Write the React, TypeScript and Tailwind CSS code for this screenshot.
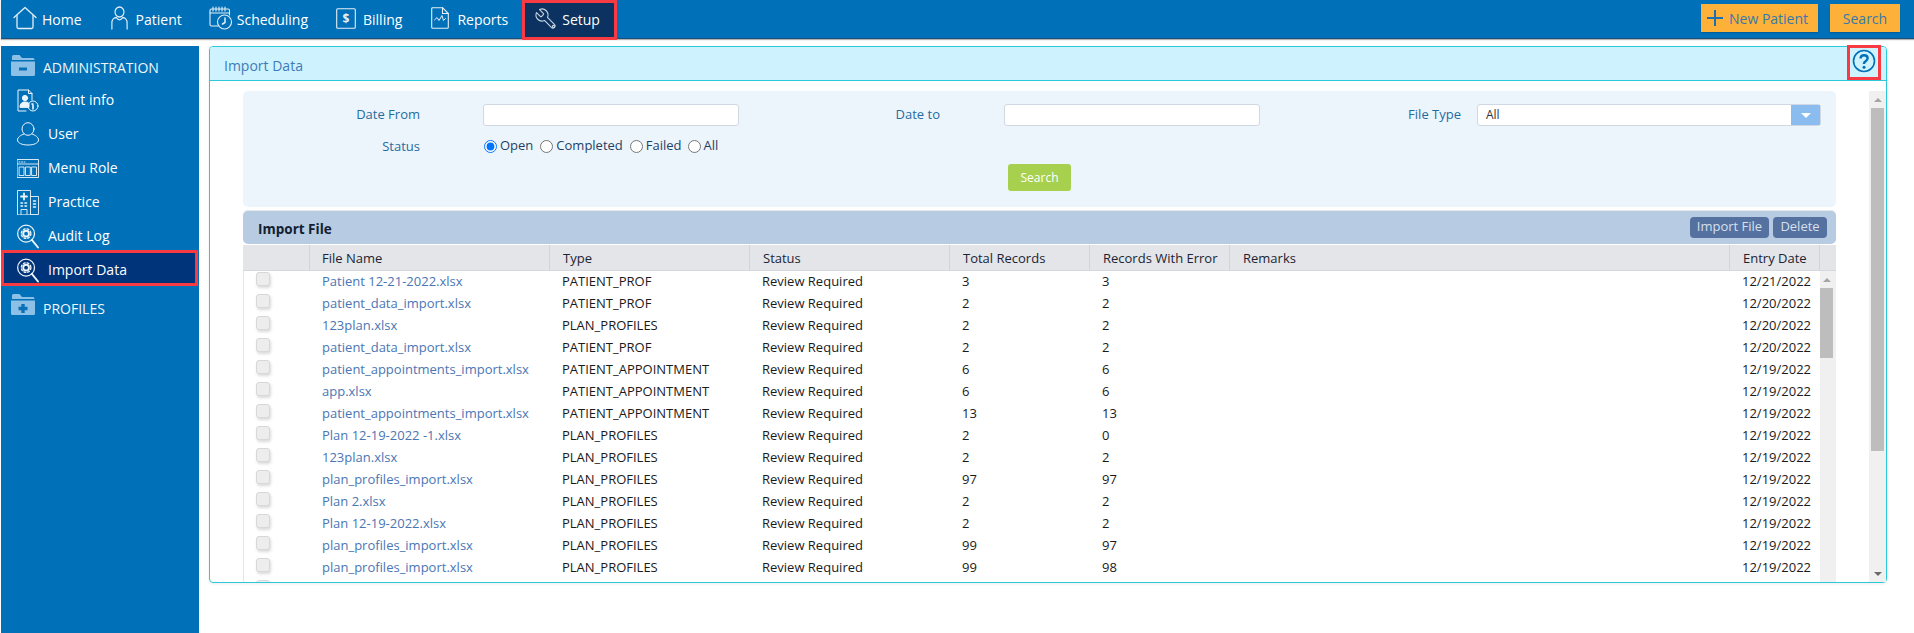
import React from "react";

const S = { fill: "none", stroke: "currentColor", strokeWidth: 1.3, strokeLinecap: "round" as const, strokeLinejoin: "round" as const };

const HomeIcon = () => (
  <svg width="24" height="24" viewBox="0 0 24 24" {...S}>
    <path d="M1 11.5 12 1.5l11 10" />
    <path d="M4 9.5V21a1.5 1.5 0 0 0 1.5 1.5h13A1.5 1.5 0 0 0 20 21V9.5" />
  </svg>
);
const PatientIcon = () => (
  <svg width="17" height="24" viewBox="0 0 19 24" preserveAspectRatio="none" {...S}>
    <circle cx="9.5" cy="6" r="5" />
    <path d="M1 23v-6c0-3.5 2.5-5.5 5-5.5 1 1.5 2.2 2.3 3.5 2.3S12 13 13 11.500c2.500 0 5 2 5 5.500v6" />
  </svg>
);
const ScheduleIcon = () => (
  <svg width="24" height="24" viewBox="0 0 24 24" {...S} strokeWidth={1.1}>
    <path d="M9 20H2.500A1.500 1.500 0 0 1 1 18.500V4.500A1.500 1.500 0 0 1 2.500 3H19a1.500 1.500 0 0 1 1.500 1.500V9" />
    <path d="M4 1v4M7 1v4M10 1v4M13 1v4M16 1v4" />
    <path d="M1 7h19.500" />
    <circle cx="15.500" cy="16" r="7" />
    <path d="M16 12v4.500l-2.500 1.500" strokeWidth={1.5} />
  </svg>
);
const BillIcon = () => (
  <svg width="20" height="21" viewBox="0 0 20 21" {...S} strokeWidth={1.1}>
    <rect x="0.700" y="0.700" width="18.600" height="19.600" rx="1" />
    <text x="10" y="15" textAnchor="middle" fontSize="12" fontWeight="700" fill="currentColor" stroke="none" fontFamily="'Open Sans',sans-serif">$</text>
  </svg>
);
const ReportIcon = () => (
  <svg width="18" height="22" viewBox="0 0 18 22" {...S} strokeWidth={1.1}>
    <path d="M11.500 0.700H1.700a1 1 0 0 0-1 1v18.600a1 1 0 0 0 1 1h14.600a1 1 0 0 0 1-1V6.500z" />
    <path d="M11.500 0.700V6.500h5.800" />
    <path d="M3.500 13l2.500-2.500 2 3 3-5 1.500 5 2-2" strokeWidth={1} />
  </svg>
);
const WrenchIcon = () => (
  <svg width="24" height="24" viewBox="0 0 24 24" {...S} strokeWidth={1.1} className="text-[#c8d4e2] -mt-[2px]">
    <g transform="translate(24 0) scale(-1 1)">
      <path d="M14.700 6.300a1 1 0 0 0 0 1.400l1.600 1.600a1 1 0 0 0 1.400 0l3.770-3.770a6 6 0 0 1-7.940 7.940l-6.910 6.910a2.120 2.120 0 0 1-3-3l6.910-6.910a6 6 0 0 1 7.940-7.940l-3.760 3.760z" />
      <circle cx="4.500" cy="19.500" r="1.100" />
    </g>
  </svg>
);
const FolderIcon = ({ plus }: { plus?: boolean }) => (
  <svg width="24" height="21" viewBox="0 0 24 21">
    <path d="M1 5V1.500A1.500 1.500 0 0 1 2.500 0h6L11 3h11a1.500 1.500 0 0 1 1.500 1.500V5z" fill="#8cc0e6" />
    <path d="M0 6.500h24v13a1.500 1.500 0 0 1-1.500 1.500h-21A1.500 1.500 0 0 1 0 19.500z" fill="#8cc0e6" />
    {plus ? <path d="M10.300 10h3.400v2.800h2.800v3.400h-2.800V19h-3.400v-2.800H7.500v-3.400h2.800z" fill="#0b70b6" /> : <rect x="8" y="12.500" width="8" height="3" fill="#0b70b6" />}
  </svg>
);
const ClientIcon = () => (
  <svg width="22" height="23" viewBox="0 0 22 23" {...S} strokeWidth={1}>
    <path d="M9 22H1V1h10.500L15 4.500V11" />
    <path d="M11.500 1v3.500H15" />
    <circle cx="8" cy="9" r="2.600" fill="currentColor" />
    <path d="M3 18c0-3.500 2-5 5-5s3.500.8 4 1.500V18z" fill="currentColor" />
    <circle cx="16" cy="17" r="5" />
    <path d="M16 16v4M15 15h1" strokeWidth={1.6} />
  </svg>
);
const UserIcon = () => (
  <svg width="22" height="24" viewBox="0 0 22 24" {...S} strokeWidth={1}>
    <ellipse cx="11" cy="7" rx="6" ry="6.300" />
    <path d="M7 12c-3.500 1.200-6.500 3.300-6.500 6 0 3 4.500 5 10.500 5s10.500-2 10.500-5c0-2.700-3-4.800-6.500-6" />
  </svg>
);
const MenuIcon = () => (
  <svg width="22" height="19" viewBox="0 0 22 19" {...S} strokeWidth={0.9}>
    <rect x="0.500" y="0.500" width="21" height="18" />
    <path d="M0.500 5h21" />
    <path d="M2 3h1M4.500 3h1M7 3h1" />
    <rect x="2.500" y="8" width="4.500" height="8.500" />
    <rect x="8.800" y="8" width="4.500" height="8.500" />
    <rect x="15" y="8" width="4.500" height="8.500" />
  </svg>
);
const PracticeIcon = () => (
  <svg width="22" height="25" viewBox="0 0 22 25" {...S} strokeWidth={0.9}>
    <path d="M0.500 24.500V0.500h13v24z" />
    <path d="M13.500 6.500h8v18h-8" />
    <path d="M7 3.500v6M4 6.500h6" strokeWidth={1.800} />
    <path d="M4 13h1.500M8 13h1.500M4 16h1.500M8 16h1.500M16.500 11h2M16.500 14h2M16.500 17h2" strokeWidth={1.500} />
    <path d="M4 24.500V19.500h6v5" />
  </svg>
);
const AuditIcon = () => (
  <svg width="23" height="25" viewBox="0 0 23 25" {...S}>
    <circle cx="9.500" cy="9.500" r="8.800" />
    <circle cx="9.500" cy="9.500" r="3" strokeWidth={2} />
    <circle cx="9.500" cy="9.500" r="5" strokeWidth={1.400} strokeDasharray="2 2" />
    <path d="M15.500 16 22 24" strokeWidth={2} />
  </svg>
);
const HelpIcon = () => (
  <svg width="24" height="24" viewBox="0 0 24 24" fill="none" stroke="#0070b8" className="-mt-[3px]">
    <circle cx="12" cy="12" r="10.500" strokeWidth="1.600" />
    <path d="M8.500 9.500C8.700 7.300 10 6.300 12 6.300c2.200 0 3.600 1.200 3.600 3 0 1.500-1 2.300-2 3-.9.600-1.600 1.200-1.600 2.300v.5" strokeWidth="2.400" />
    <circle cx="12" cy="18.300" r="1.500" fill="#0070b8" stroke="none" />
  </svg>
);

const nav: { label: string; icon: React.ReactNode; w: string; gap: string; ml: string }[] = [
  { label: "Home", icon: <HomeIcon />, w: "w-[24px]", gap: "ml-[5px]", ml: "ml-[12px]" },
  { label: "Patient", icon: <PatientIcon />, w: "w-[17px]", gap: "ml-[8px]", ml: "ml-[29px]" },
  { label: "Scheduling", icon: <ScheduleIcon />, w: "w-[24px]", gap: "ml-[4px]", ml: "ml-[27px]" },
  { label: "Billing", icon: <BillIcon />, w: "w-[20px]", gap: "ml-[7px]", ml: "ml-[28px]" },
  { label: "Reports", icon: <ReportIcon />, w: "w-[18px]", gap: "ml-[8px]", ml: "ml-[29px]" },
];

const side: { label: string; icon: React.ReactNode }[] = [
  { label: "Client info", icon: <ClientIcon /> },
  { label: "User", icon: <UserIcon /> },
  { label: "Menu Role", icon: <MenuIcon /> },
  { label: "Practice", icon: <PracticeIcon /> },
  { label: "Audit Log", icon: <AuditIcon /> },
];

const rows: [string, string, string, string, string][] = [
  ["Patient 12-21-2022.xlsx", "PATIENT_PROF", "3", "3", "12/21/2022"],
  ["patient_data_import.xlsx", "PATIENT_PROF", "2", "2", "12/20/2022"],
  ["123plan.xlsx", "PLAN_PROFILES", "2", "2", "12/20/2022"],
  ["patient_data_import.xlsx", "PATIENT_PROF", "2", "2", "12/20/2022"],
  ["patient_appointments_import.xlsx", "PATIENT_APPOINTMENT", "6", "6", "12/19/2022"],
  ["app.xlsx", "PATIENT_APPOINTMENT", "6", "6", "12/19/2022"],
  ["patient_appointments_import.xlsx", "PATIENT_APPOINTMENT", "13", "13", "12/19/2022"],
  ["Plan 12-19-2022 -1.xlsx", "PLAN_PROFILES", "2", "0", "12/19/2022"],
  ["123plan.xlsx", "PLAN_PROFILES", "2", "2", "12/19/2022"],
  ["plan_profiles_import.xlsx", "PLAN_PROFILES", "97", "97", "12/19/2022"],
  ["Plan 2.xlsx", "PLAN_PROFILES", "2", "2", "12/19/2022"],
  ["Plan 12-19-2022.xlsx", "PLAN_PROFILES", "2", "2", "12/19/2022"],
  ["plan_profiles_import.xlsx", "PLAN_PROFILES", "99", "97", "12/19/2022"],
  ["plan_profiles_import.xlsx", "PLAN_PROFILES", "99", "98", "12/19/2022"],
];

const Check = () => (
  <span className="block w-[14px] h-[14px] mt-px ml-[12px] rounded-[3px] bg-[#ededed] border border-[#d8d8d8] shadow-[1px_2px_3px_rgba(0,0,0,0.15)]" />
);

const Radio = ({ label, checked, cls }: { label: string; checked?: boolean; cls: string }) => (
  <label className={`flex items-center ${cls}`}>
    <input type="radio" name="status" defaultChecked={checked} className="m-0 w-[13px] h-[13px]" />
    <span className="ml-[3px] text-[13px] text-[#1f3f66]">{label}</span>
  </label>
);

const Bar = ({ cls, thumbH, downArrow }: { cls: string; thumbH: string; downArrow?: boolean }) => (
  <div className={`${cls} h-full bg-[#f0f0f0] flex flex-col items-center shrink-0`}>
    <div className="h-[17px] flex items-center justify-center shrink-0">
      <span className="w-0 h-0 border-x-[4px] border-x-transparent border-b-[4px] border-b-[#a5a5a5]" />
    </div>
    <div className={`${thumbH} bg-[#bdbdbd] shrink-0 w-[13px]`} />
    <div className="flex-1 flex items-end justify-center pb-[6px]">
      {downArrow ? <span className="w-0 h-0 border-x-[4px] border-x-transparent border-t-[4px] border-t-[#6a6a6a]" /> : null}
    </div>
  </div>
);

export default function App() {
  return (
    <div className="w-[1914px] h-[633px] overflow-hidden bg-white font-['Open_Sans',sans-serif]">
      <header className="ml-px h-[39px] bg-[#0070b8] border-b border-[#1d4e7c] shadow-[0_1px_1px_rgba(0,0,0,0.3)] flex items-start">
        {nav.map((n) => (
          <div key={n.label} className={`${n.ml} h-[37px] flex items-center text-white text-[14px]`}>
            <span className={`${n.w} flex justify-center text-[#e4eff7] -mt-[1px]`}>{n.icon}</span>
            <span className={`${n.gap} mt-[2px]`}>{n.label}</span>
          </div>
        ))}
        <div className="ml-[14px] w-[95px] h-[40px] shrink-0 bg-[#0b3260] border-[3px] border-[#f83a42] flex items-center pl-[9px] text-white text-[14px] relative z-10">
          <WrenchIcon />
          <span className="ml-[4px] -mt-[1px]">Setup</span>
        </div>
        <div className="ml-auto mr-[14px] mt-[4px] flex gap-[12px]">
          <div className="w-[117px] h-[28px] bg-[#fdb138] flex items-center pl-[6px] text-[14px] text-[#3878ad] shadow-[0_1px_1px_rgba(0,0,0,0.15)]">
            <svg width="16" height="16" viewBox="0 0 16 16" stroke="#1c6fb0" strokeWidth="2"><path d="M8 0v16M0 8h16" /></svg>
            <span className="ml-[6px]">New Patient</span>
          </div>
          <div className="w-[70px] h-[28px] bg-[#fdb138] flex items-center justify-center text-[14px] text-[#3878ad] shadow-[0_1px_1px_rgba(0,0,0,0.15)]">Search</div>
        </div>
      </header>

      <div className="flex mt-[7px] ml-px">
        <aside className="w-[198px] h-[590px] bg-[#0070b8] shrink-0 text-white text-[14px]">
          <div className="h-[37px] flex items-start pl-[10px] pt-[9px]">
            <FolderIcon />
            <span className="ml-[8px] mt-[3px] leading-[20px] text-[#f0f6fb]">ADMINISTRATION</span>
          </div>
          {side.map((s) => (
            <div key={s.label} className="h-[34px] flex items-center pl-[16px]">
              <span className="w-[22px] flex justify-center text-[#eef5fa]">{s.icon}</span>
              <span className="ml-[9px] -mt-[1px]">{s.label}</span>
            </div>
          ))}
          <div className="h-[36px] -mt-[3px] mr-px pt-[4px] flex items-center pl-[13px] bg-[#00347a] border-[3px] border-[#f83a42] relative">
            <span className="w-[22px] flex justify-center text-[#eef5fa]"><AuditIcon /></span>
            <span className="ml-[9px] -mt-[1px]">Import Data</span>
          </div>
          <div className="mt-[8px] flex items-start pl-[10px]">
            <FolderIcon plus />
            <span className="ml-[8px] mt-[5px] leading-[20px] text-[#f0f6fb]">PROFILES</span>
          </div>
        </aside>

        <main className="ml-[10px] w-[1678px] h-[537px] shrink-0 border border-[#2cc9d9] rounded-[4px] shadow-[0_1px_3px_rgba(0,0,0,0.08)] flex flex-col">
          <div className="h-[34px] shrink-0 bg-[#cff2ff] border-b border-[#2cc9d9] rounded-t-[3px] flex items-center pl-[14px] pt-[3px] text-[14px] text-[#3d7cb8] relative">
            <span>Import Data</span>
            <div className="absolute right-[5px] -top-[2px] w-[34px] h-[35px] border-[3px] border-[#f83a42] flex items-center justify-center">
              <HelpIcon />
            </div>
          </div>

          <div className="flex flex-1 min-h-0 pt-[10px] pl-[33px]">
            <div className="w-[1593px] shrink-0 flex flex-col min-h-0">
              <section className="h-[116px] shrink-0 bg-[#edf5fc] rounded-[5px] pt-[13px]">
                <div className="flex items-center h-[22px] text-[13px] text-[#1f6c9f]">
                  <span className="w-[177px] text-right">Date From</span>
                  <span className="ml-[63px] w-[256px] h-[22px] bg-white border border-[#cfd8e3] rounded-[3px]" />
                  <span className="w-[201px] text-right">Date to</span>
                  <span className="ml-[64px] w-[256px] h-[22px] bg-white border border-[#cfd8e3] rounded-[3px]" />
                  <span className="w-[201px] text-right">File Type</span>
                  <span className="ml-[16px] w-[344px] h-[22px] bg-white border border-[#cfd8e3] rounded-[3px] flex items-center justify-between text-[12px] text-[#333]">
                    <span className="pl-[8px]">All</span>
                    <span className="w-[29px] h-full bg-[#8bbcf0] flex items-center justify-center">
                      <span className="w-0 h-0 border-x-[5px] border-x-transparent border-t-[5px] border-t-white" />
                    </span>
                  </span>
                </div>
                <div className="flex items-center h-[22px] mt-[9px] text-[13px]">
                  <span className="w-[177px] mt-[2px] text-right text-[#1f6c9f]">Status</span>
                  <Radio label="Open" checked cls="ml-[64px]" />
                  <Radio label="Completed" cls="ml-[7px]" />
                  <Radio label="Failed" cls="ml-[7px]" />
                  <Radio label="All" cls="ml-[6px]" />
                </div>
                <div className="flex mt-[7px] pl-[765px]">
                  <button className="w-[63px] h-[27px] rounded-[3px] bg-[#a6d04e] text-white text-[12px]">Search</button>
                </div>
              </section>

              <div className="h-[33px] mt-[4px] shrink-0 bg-[#b7cbe3] rounded-[5px] flex items-center pl-[15px] pr-[9px] shadow-[0_-1px_1px_rgba(0,0,0,0.1)]">
                <span className="mt-[3px] text-[13.500px] font-bold text-[#13202f]">Import File</span>
                <button className="ml-auto mb-px w-[79px] h-[21px] rounded-[4px] bg-[#54719f] text-[#d6e0ee] text-[13px]">Import File</button>
                <button className="ml-[4px] mb-px w-[54px] h-[21px] rounded-[4px] bg-[#54719f] text-[#d6e0ee] text-[13px]">Delete</button>
              </div>

              <div className="mt-px h-[26px] shrink-0 bg-[#e3e5e9] border-b border-[#d6d8dc] grid grid-cols-[67px_240px_200px_200px_140px_140px_500px_90px_16px] text-[13px] text-[#1c2433]">
                {["", "File Name", "Type", "Status", "Total Records", "Records With Error", "Remarks", "Entry Date", ""].map((h, i) => (
                  <span key={i} className={`flex items-center pt-[2px] ${i === 1 ? "pl-[12px]" : "pl-[13px]"} ${i < 8 ? "border-r border-[#d2d4d8]" : ""}`}>{h}</span>
                ))}
              </div>

              <div className="flex flex-1 min-h-0 border-l border-[#e3e5e9]">
                <div className="w-[1576px] shrink-0 overflow-hidden text-[13px] text-[#1a1a1a]">
                  {rows.map((r, i) => (
                    <div key={i} className="h-[22px] grid grid-cols-[65px_240px_200px_200px_140px_140px_500px_90px]">
                      <span><Check /></span>
                      <span className="flex items-center pl-[13px] text-[#4a76b4]">{r[0]}</span>
                      <span className="flex items-center pl-[13px]">{r[1]}</span>
                      <span className="flex items-center pl-[13px]">Review Required</span>
                      <span className="flex items-center pl-[13px]">{r[2]}</span>
                      <span className="flex items-center pl-[13px]">{r[3]}</span>
                      <span />
                      <span className="flex items-center pl-[13px]">{r[4]}</span>
                    </div>
                  ))}
                  <div className="h-[22px]"><Check /></div>
                </div>
                <Bar cls="w-[16px] pr-[3px]" thumbH="h-[70px]" />
              </div>
            </div>
            <div className="ml-[33px] flex-1 min-w-0 h-full">
              <Bar cls="w-[17px] px-[2px]" thumbH="h-[343px]" downArrow />
            </div>
          </div>
        </main>
      </div>
    </div>
  );
}
